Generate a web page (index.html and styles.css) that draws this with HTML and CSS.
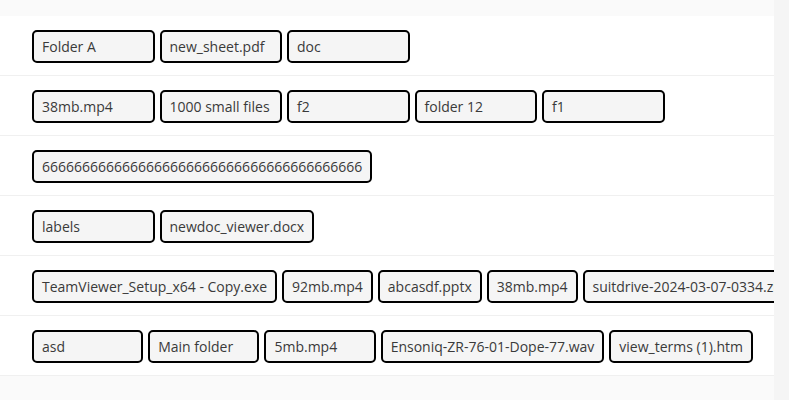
FILE: index.html
```html
<!DOCTYPE html>
<html>
<head>
<meta charset="utf-8">
<link rel="stylesheet" href="styles.css">
</head>
<body>
<div class="page">
  <main class="content">
    <div class="band"></div>
    <div class="row">
      <span class="tag">Folder A</span>
      <span class="tag">new_sheet.pdf</span>
      <span class="tag">doc</span>
    </div>
    <div class="row">
      <span class="tag">38mb.mp4</span>
      <span class="tag">1000 small files</span>
      <span class="tag">f2</span>
      <span class="tag">folder 12</span>
      <span class="tag">f1</span>
    </div>
    <div class="row">
      <span class="tag">6666666666666666666666666666666666666666</span>
    </div>
    <div class="row">
      <span class="tag">labels</span>
      <span class="tag">newdoc_viewer.docx</span>
    </div>
    <div class="row">
      <span class="tag">TeamViewer_Setup_x64 - Copy.exe</span>
      <span class="tag">92mb.mp4</span>
      <span class="tag">abcasdf.pptx</span>
      <span class="tag">38mb.mp4</span>
      <span class="tag">suitdrive-2024-03-07-0334.zip</span>
    </div>
    <div class="row">
      <span class="tag">asd</span>
      <span class="tag">Main folder</span>
      <span class="tag">5mb.mp4</span>
      <span class="tag">Ensoniq-ZR-76-01-Dope-77.wav</span>
      <span class="tag">view_terms (1).htm</span>
    </div>
    <div class="rest"></div>
  </main>
  <div class="scrollbar"></div>
</div>
</body>
</html>
```
FILE: styles.css
```css
* { box-sizing: border-box; }
html, body { margin: 0; padding: 0; height: 100%; }
body {
  font-family: "Open Sans", "Liberation Sans", sans-serif;
  font-size: 14px;
  color: #333;
  background: #fafafa;
}
.page {
  display: flex;
  height: 400px;
  overflow: hidden;
}
.content {
  flex: 0 0 774px;
  width: 774px;
  overflow: hidden;
  display: flex;
  flex-direction: column;
}
.band {
  height: 16px;
  background: #fafafa;
}
.row {
  display: flex;
  gap: 5px;
  align-items: center;
  height: 60px;
  padding: 1px 21px 0 32px;
  background: #fff;
  border-bottom: 1px solid #f0f0f0;
}
.tag {
  flex: 0 1 122.5px;
  white-space: nowrap;
  height: 33px;
  line-height: 29px;
  padding: 0 8px;
  border: 2px solid #000;
  border-radius: 5px;
  background: #f5f5f5;
  color: #3a3a3a;
}
.rest {
  flex: 1;
  background: #fafafa;
}
.scrollbar {
  flex: 1;
  background: #f5f5f5;
}
```
